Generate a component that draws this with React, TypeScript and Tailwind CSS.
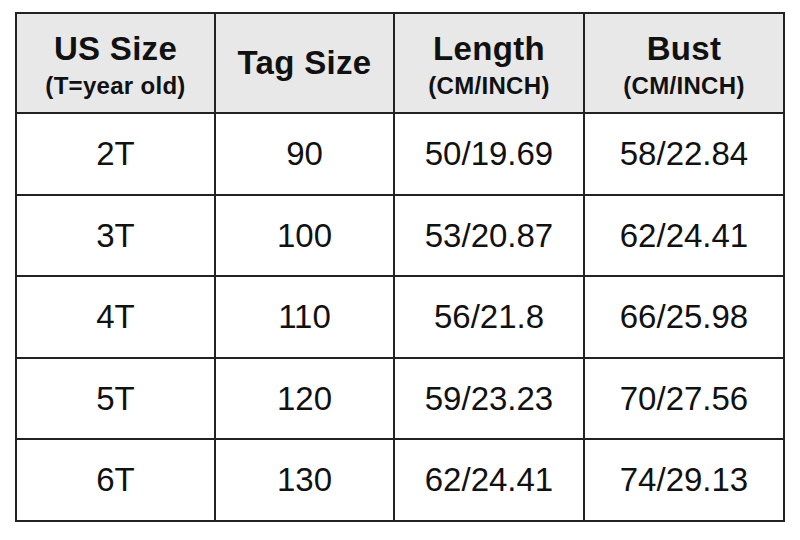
const rows = [
  ["2T", "90", "50/19.69", "58/22.84"],
  ["3T", "100", "53/20.87", "62/24.41"],
  ["4T", "110", "56/21.8", "66/25.98"],
  ["5T", "120", "59/23.23", "70/27.56"],
  ["6T", "130", "62/24.41", "74/29.13"],
];

export default function App() {
  return (
    <div
      className="w-[800px] h-[540px] bg-white pt-[12px] pl-[15px]"
      style={{ fontFamily: '"Liberation Sans", Arial, sans-serif' }}
    >
      <table className="table-fixed border-collapse text-[#111] text-center w-[768px]">
        <colgroup>
          <col className="w-[199px]" />
          <col className="w-[179px]" />
          <col className="w-[190px]" />
          <col className="w-[200px]" />
        </colgroup>
        <thead>
          <tr className="h-[100px] bg-[#e8e8e8]">
            <th className="border-2 border-[#222] p-0 pt-[5px] font-bold">
              <div className="text-[33px] leading-[36px] tracking-[0.3px]">US Size</div>
              <div className="text-[24px] leading-[28px] mt-[5px] tracking-[0.3px]">(T=year old)</div>
            </th>
            <th className="border-2 border-[#222] p-0 font-bold text-[33px] tracking-[0.3px]">Tag Size</th>
            <th className="border-2 border-[#222] p-0 pt-[5px] font-bold">
              <div className="text-[33px] leading-[36px] tracking-[0.3px]">Length</div>
              <div className="text-[24px] leading-[28px] mt-[5px] tracking-[0.3px]">(CM/INCH)</div>
            </th>
            <th className="border-2 border-[#222] p-0 pt-[5px] font-bold">
              <div className="text-[33px] leading-[36px] tracking-[0.3px]">Bust</div>
              <div className="text-[24px] leading-[28px] mt-[5px] tracking-[0.3px]">(CM/INCH)</div>
            </th>
          </tr>
        </thead>
        <tbody>
          {rows.map((r) => (
            <tr key={r[0]} className="h-[81.5px]">
              {r.map((c, i) => (
                <td key={i} className="border-2 border-[#222] p-0 text-[33px] leading-none">
                  {c}
                </td>
              ))}
            </tr>
          ))}
        </tbody>
      </table>
    </div>
  );
}
